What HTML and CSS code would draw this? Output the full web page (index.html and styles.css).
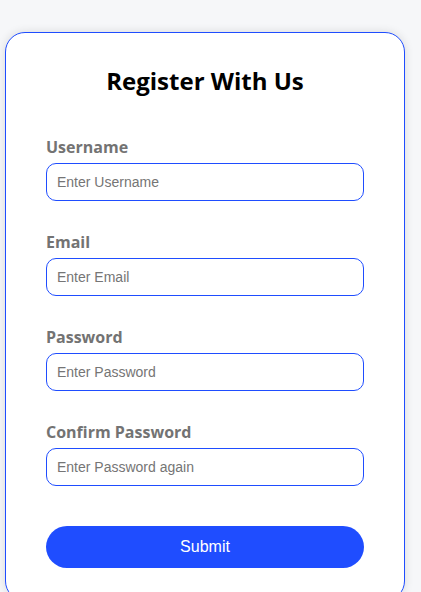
FILE: index.html
```html
<!DOCTYPE html>
<html lang="en">
<head>
<meta charset="utf-8">
<title>Register</title>
<link rel="stylesheet" href="styles.css">
</head>
<body>
<div class="card">
  <h2 class="title">Register With Us</h2>
  <form class="form">
    <div class="field">
      <label class="label" for="u">Username</label>
      <input class="input" id="u" type="text" placeholder="Enter Username">
    </div>
    <div class="field">
      <label class="label" for="e">Email</label>
      <input class="input" id="e" type="email" placeholder="Enter Email">
    </div>
    <div class="field">
      <label class="label" for="p">Password</label>
      <input class="input" id="p" type="password" placeholder="Enter Password">
    </div>
    <div class="field">
      <label class="label" for="c">Confirm Password</label>
      <input class="input" id="c" type="password" placeholder="Enter Password again">
    </div>
    <button class="submit" type="button">Submit</button>
  </form>
</div>
</body>
</html>
```
FILE: styles.css
```css
html, body {
  margin: 0;
  padding: 0;
  background: #f6f7f9;
}
body {
  padding: 32px 0 0 5px;
  font-family: "Open Sans", sans-serif;
}
.card {
  box-sizing: border-box;
  width: 400px;
  background: #ffffff;
  border: 1px solid #1f4dff;
  border-radius: 20px;
  padding: 30px 40px 32px;
  box-shadow: 0 0 10px rgba(0, 0, 0, 0.12);
}
.title {
  margin: 0 0 36px;
  text-align: center;
  font-size: 24px;
  font-weight: 700;
  color: #000;
  line-height: 36px;
}
.form {
  display: flex;
  flex-direction: column;
}
.field {
  display: flex;
  flex-direction: column;
  gap: 4px;
  margin-bottom: 29px;
}
.label {
  font-size: 16px;
  font-weight: 700;
  color: #737373;
  line-height: 24px;
}
.input {
  box-sizing: border-box;
  height: 38px;
  border: 1px solid #1f4dff;
  border-radius: 10px;
  padding: 0 10px;
  font-family: "Liberation Sans", Arial, sans-serif;
  font-size: 14px;
  color: #333;
  outline: none;
}
.input::placeholder {
  color: #757575;
}
.submit {
  margin-top: 11px;
  height: 42px;
  border: none;
  border-radius: 21px;
  background: #1f4dff;
  color: #fff;
  font-family: "Liberation Sans", Arial, sans-serif;
  font-size: 16px;
}
```
